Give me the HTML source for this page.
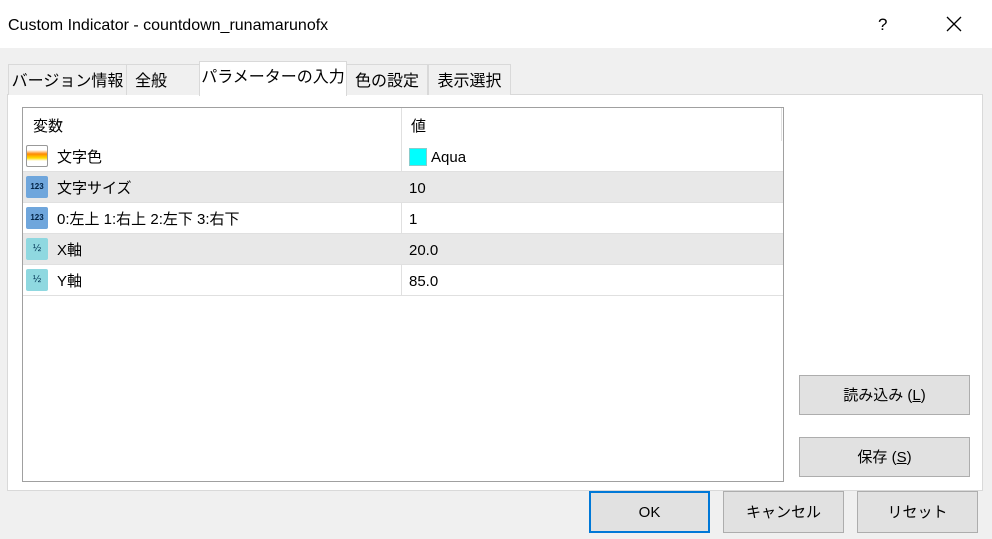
<!DOCTYPE html>
<html><head><meta charset="utf-8"><style>
*{box-sizing:border-box;margin:0;padding:0}
body{width:992px;height:539px;background:#f0f0f0;font-family:"Liberation Sans","Noto Sans CJK JP",sans-serif;font-size:15px;line-height:20px;color:#000;position:relative;overflow:hidden}
.abs{position:absolute}
.title{left:0;top:0;width:992px;height:48px;background:#fff}
.tab{top:64px;height:31px;background:#f0f0f0;border:1px solid #d9d9d9;border-bottom:none;padding:7px 0 0 0;text-align:center;font-size:16px;line-height:20px}
.panel{left:7px;top:94px;width:976px;height:397px;background:#fff;border:1px solid #d9d9d9}
.list{left:22px;top:107px;width:762px;height:375px;border:1px solid #a0a0a0;background:#fff}
.row{position:absolute;left:0;width:760px;height:31px;border-bottom:1px solid #e0e0e0;font-size:15px}
.row span{position:absolute;top:7px;line-height:20px}
.g{background:#e8e8e8}
.btn{background:#e1e1e1;border:1px solid #adadad;text-align:center;font-size:15px;line-height:20px}
.ic{position:absolute;left:3px;top:4px;width:22px;height:22px;border-radius:2px}
</style></head><body>
<div class="abs title"></div>
<div class="abs" style="left:8px;top:16px;font-size:16px">Custom Indicator - countdown_runamarunofx</div>
<div class="abs" style="left:878px;top:15px;font-size:17px">?</div>
<svg class="abs" style="left:946px;top:16px" width="16" height="16"><path d="M1 1L15 15M15 1L1 15" stroke="#000" stroke-width="1.3"/></svg>
<div class="abs panel"></div>
<div class="abs tab" style="left:8px;width:119px">バージョン情報</div>
<div class="abs tab" style="left:126px;width:74px;text-align:left;padding-left:8px">全般</div>
<div class="abs tab" style="left:199px;top:61px;height:35px;width:148px;background:#fff;padding-top:6px">パラメーターの入力</div>
<div class="abs tab" style="left:346px;width:82px">色の設定</div>
<div class="abs tab" style="left:428px;width:83px">表示選択</div>
<div class="abs list">
 <div class="row" style="top:0;height:33px;border-bottom:none"><span style="left:10px;top:9px">変数</span><span style="left:388px;top:9px">値</span></div>
 <div class="abs" style="left:378px;top:0;width:1px;height:188px;background:#e0e0e0"></div>
 <div class="abs" style="left:758px;top:0;width:1px;height:33px;background:#e0e0e0"></div>
 <div class="row" style="top:33px"><div class="ic" style="background:linear-gradient(#fff 20%,#f80 40%,#fd0 60%,#fff 75%);border:1px solid #999"></div><span style="left:34px">文字色</span><div class="abs" style="left:386px;top:7px;width:18px;height:18px;background:#0ff;border:1px solid #8cc"></div><span style="left:408px">Aqua</span></div>
 <div class="row g" style="top:64px"><div class="ic" style="background:#6fa6dc;font-size:8px;line-height:22px;color:#024;font-weight:bold;text-align:center">123</div><span style="left:34px">文字サイズ</span><span style="left:386px">10</span></div>
 <div class="row" style="top:95px"><div class="ic" style="background:#6fa6dc;font-size:8px;line-height:22px;color:#024;font-weight:bold;text-align:center">123</div><span style="left:34px">0:左上 1:右上 2:左下 3:右下</span><span style="left:386px">1</span></div>
 <div class="row g" style="top:126px"><div class="ic" style="background:#8fd8e0;font-size:10px;line-height:22px;color:#035;text-align:center">½</div><span style="left:34px">X軸</span><span style="left:386px">20.0</span></div>
 <div class="row" style="top:157px"><div class="ic" style="background:#8fd8e0;font-size:10px;line-height:22px;color:#035;text-align:center">½</div><span style="left:34px">Y軸</span><span style="left:386px">85.0</span></div>
</div>
<div class="abs btn" style="left:799px;top:375px;width:171px;height:40px;padding-top:10px">読み込み (<u>L</u>)</div>
<div class="abs btn" style="left:799px;top:437px;width:171px;height:40px;padding-top:10px">保存 (<u>S</u>)</div>
<div class="abs btn" style="left:589px;top:491px;width:121px;height:42px;padding-top:10px;border:2px solid #0078d7">OK</div>
<div class="abs btn" style="left:723px;top:491px;width:121px;height:42px;padding-top:11px">キャンセル</div>
<div class="abs btn" style="left:857px;top:491px;width:121px;height:42px;padding-top:11px">リセット</div>
</body></html>
